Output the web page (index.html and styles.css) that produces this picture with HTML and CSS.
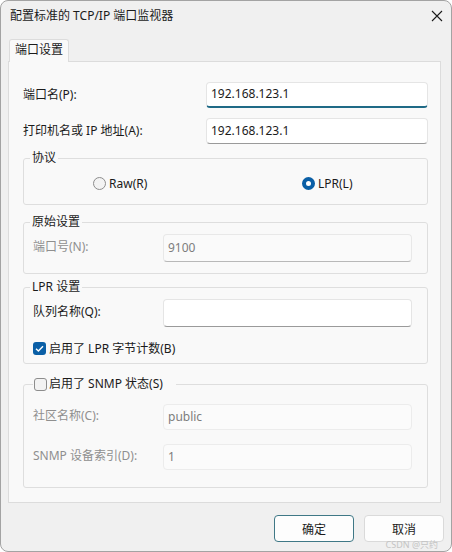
FILE: index.html
```html
<!DOCTYPE html>
<html lang="zh-CN">
<head>
  <meta charset="UTF-8" />
  <meta name="viewport" content="width=device-width, initial-scale=1.0"/>
  <title>配置标准的 TCP/IP 端口监视器</title>
  <link rel="stylesheet" href="styles.css">
</head>
<body>

  <div class="window">
    <div class="titlebar">
      <span class="title">配置标准的 TCP/IP 端口监视器</span>
      <svg class="close" width="12" height="12" viewBox="0 0 12 12">
        <path d="M1 1 L11 11 M11 1 L1 11" stroke="#1b1b1b" stroke-width="1.1" fill="none"/>
      </svg>
    </div>

    <div class="tabs">
      <div class="tab">端口设置</div>
    </div>

    <!-- 端口设置 -->
    <div class="panel">
      <div class="row">
        <label>端口名(P):</label>
        <input class="field focused" type="text" value="192.168.123.1">
      </div>
      <div class="row">
        <label>打印机名或 IP 地址(A):</label>
        <input class="field" type="text" value="192.168.123.1">
      </div>

      <fieldset class="group proto">
        <legend>协议</legend>
        <div class="radios">
          <label class="opt raw"><span class="radio"></span>Raw(R)</label>
          <label class="opt"><span class="radio on"></span>LPR(L)</label>
        </div>
      </fieldset>

      <fieldset class="group raw-set">
        <legend>原始设置</legend>
        <div class="line">
          <label class="off">端口号(N):</label>
          <input class="field dim" type="text" value="9100" disabled>
        </div>
      </fieldset>

      <fieldset class="group lpr-set">
        <legend>LPR 设置</legend>
        <div class="line">
          <label>队列名称(Q):</label>
          <input class="field" type="text" value="">
        </div>
        <label class="checkrow"><span class="check on">
          <svg width="13" height="13" viewBox="0 0 13 13"><path d="M3 6.8 L5.4 9.1 L10 4.2" stroke="#fff" stroke-width="1.4" fill="none"/></svg>
        </span>启用了 LPR 字节计数(B)</label>
      </fieldset>

      <fieldset class="group snmp-set">
        <legend><span class="check"></span>启用了 SNMP 状态(S)</legend>
        <div class="line">
          <label class="off">社区名称(C):</label>
          <input class="field flat" type="text" value="public" disabled>
        </div>
        <div class="line second">
          <label class="off">SNMP 设备索引(D):</label>
          <input class="field flat" type="text" value="1" disabled>
        </div>
      </fieldset>
    </div>

    <div class="buttons">
      <button class="btn default">确定</button>
      <button class="btn">取消</button>
    </div>

    <span class="mark">CSDN @只约</span>
  </div>

</body>
</html>
```

FILE: styles.css
```css
* {
  box-sizing: border-box;
}
body {
  margin: 0;
  font-family: "Noto Sans", "Noto Sans CJK SC", sans-serif;
  font-size: 12px;
  color: #1b1b1b;
  background: #ffffff;
}
.window {
  position: relative;
  width: 452px;
  height: 552px;
  background: #f0f0f0;
  border: 1px solid #a3a3a3;
  border-radius: 8px;
  overflow: hidden;
}
.titlebar {
  height: 29px;
  display: flex;
  align-items: center;
  justify-content: space-between;
  padding: 0 8px 0 9px;
}
.title {
  line-height: 16px;
}
.close {
  margin-top: 1px;
}
.tabs {
  margin-top: 9px;
  padding-left: 8px;
  display: flex;
}
.tab {
  height: 23px;
  padding: 0 5px;
  line-height: 20px;
  background: #f9f9f9;
  border: 1px solid #dcdcdc;
  border-bottom: none;
  border-radius: 3px 3px 0 0;
  margin-bottom: -1px;
  position: relative;
}
.panel {
  margin-left: 7px;
  width: 433px;
  height: 442px;
  background: #f9f9f9;
  border: 1px solid #dcdcdc;
  padding: 20px 12px 0 14px;
}
.row {
  display: flex;
  align-items: center;
  height: 26px;
}
.row + .row {
  margin-top: 10px;
}
.row label {
  width: 183px;
  padding-bottom: 3px;
}
.field {
  flex: 1;
  height: 100%;
  font-family: inherit;
  font-size: 12px;
  color: #1b1b1b;
  background: #ffffff;
  border: 1px solid #e5e5e5;
  border-bottom-color: #9a9a9a;
  border-radius: 4px;
  padding: 0 4px 2px;
  outline: none;
}
.field.focused {
  border-bottom: 2px solid #1f6a86;
}
.field.dim {
  background: #fafafa;
  color: #7d7d7d;
  border-color: #e8e8e8;
  border-bottom-color: #b8b8b8;
}
.field.flat {
  background: #fbfbfb;
  color: #7d7d7d;
  border-color: #ececec;
}
.group {
  margin: 6px 0 0;
  padding: 0 15px 0 9px;
  border: 1px solid #dedede;
  border-radius: 3px;
  min-width: 0;
}
.group legend {
  padding: 0 2px;
  margin-left: -3px;
  line-height: 16px;
}
.proto {
  padding-top: 9px;
  padding-bottom: 13px;
}
.radios {
  display: flex;
  height: 16px;
  padding-left: 60px;
}
.opt {
  display: flex;
  align-items: center;
  gap: 3px;
}
.opt.raw {
  width: 209px;
}
.radio {
  width: 13px;
  height: 13px;
  border-radius: 50%;
  border: 1px solid #8d8d8d;
  background: #f3f3f3;
}
.radio.on {
  border: 4px solid #0a5fa6;
  background: #ffffff;
}
.line {
  display: flex;
  align-items: center;
  height: 28px;
}
.line label {
  width: 130px;
  padding-bottom: 4px;
}
.off {
  color: #8f8f8f;
}
.raw-set {
  margin-top: 9px;
  padding-top: 4px;
  padding-bottom: 11px;
}
.lpr-set {
  margin-top: 5px;
  padding-top: 4px;
  padding-bottom: 7px;
}
.checkrow {
  display: flex;
  align-items: center;
  gap: 3px;
  height: 16px;
  margin-top: 13px;
}
.check {
  width: 13px;
  height: 13px;
  border-radius: 3px;
  border: 1px solid #8d8d8d;
  background: #f3f3f3;
  display: inline-flex;
}
.check.on {
  border: none;
  background: #0a5fa6;
}
.snmp-set {
  margin-top: 12px;
  padding-top: 12px;
  padding-bottom: 17px;
}
.snmp-set legend {
  display: flex;
  align-items: center;
  gap: 2px;
  padding: 0 13px 0 1px;
  margin-left: 0;
}
.snmp-set .line {
  height: 26px;
}
.snmp-set .second {
  margin-top: 14px;
}
.buttons {
  display: flex;
  justify-content: flex-end;
  gap: 10px;
  margin-top: 12px;
  padding-right: 7px;
}
.btn {
  width: 80px;
  height: 27px;
  font-family: inherit;
  font-size: 12px;
  color: #1b1b1b;
  background: #fdfdfd;
  border: 1px solid #dadada;
  border-radius: 4px;
}
.btn.default {
  border-color: #3f7886;
}
.mark {
  position: absolute;
  right: 13px;
  bottom: 1px;
  font-size: 9px;
  line-height: 10px;
  color: #c4c4c4;
}
```
